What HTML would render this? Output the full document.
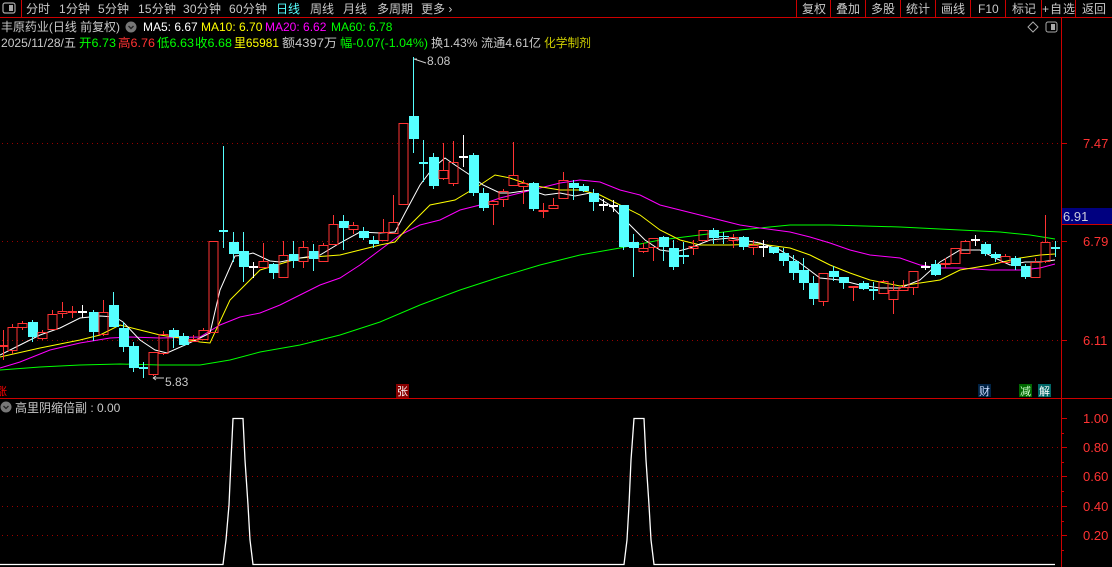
<!DOCTYPE html>
<html><head><meta charset="utf-8"><style>
body{margin:0;width:1112px;height:567px;background:#000;overflow:hidden;font-family:"Liberation Sans","Noto Sans CJK SC",sans-serif;}
svg{position:absolute;left:0;top:0}
text{font-family:"Liberation Sans","Noto Sans CJK SC",sans-serif;}
</style></head><body>
<svg id="s" width="1112" height="567" xmlns="http://www.w3.org/2000/svg">
<rect width="1112" height="567" fill="#000"/>
<line x1="0" y1="17.5" x2="1112" y2="17.5" stroke="#c00" stroke-width="1"/>
<line x1="21.5" y1="0" x2="21.5" y2="17" stroke="#c00"/>
<rect x="3" y="3" width="12" height="10" rx="2" fill="none" stroke="#aaa" stroke-width="1.2"/><rect x="9" y="5" width="4" height="6" fill="#aaa"/>
<g font-size="12" fill="#c8c8c8">
<text x="26" y="13">分时</text><text x="59" y="13" textLength="31">1分钟</text><text x="98" y="13" textLength="31">5分钟</text><text x="138" y="13" textLength="38">15分钟</text><text x="183" y="13" textLength="38">30分钟</text><text x="229" y="13" textLength="38">60分钟</text>
<text x="276" y="13" fill="#5ff">日线</text><text x="310" y="13">周线</text><text x="343" y="13">月线</text><text x="377" y="13">多周期</text><text x="421" y="13">更多 ›</text>
<text x="802" y="13">复权</text><text x="836" y="13">叠加</text><text x="871" y="13">多股</text><text x="906" y="13">统计</text><text x="941" y="13">画线</text><text x="978" y="13">F10</text><text x="1012" y="13">标记</text><text x="1042" y="13" textLength="33">+自选</text><text x="1082" y="13">返回</text>
</g>
<g stroke="#c00"><line x1="796.5" y1="0" x2="796.5" y2="17"/><line x1="830.5" y1="0" x2="830.5" y2="17"/><line x1="865.5" y1="0" x2="865.5" y2="17"/><line x1="900.5" y1="0" x2="900.5" y2="17"/><line x1="935.5" y1="0" x2="935.5" y2="17"/><line x1="970.5" y1="0" x2="970.5" y2="17"/><line x1="1005.5" y1="0" x2="1005.5" y2="17"/><line x1="1041.5" y1="0" x2="1041.5" y2="17"/><line x1="1075.5" y1="0" x2="1075.5" y2="17"/></g>
<g font-size="12">
<text x="1" y="31" fill="#c8c8c8" textLength="119" lengthAdjust="spacingAndGlyphs">丰原药业(日线 前复权)</text>
<circle cx="131" cy="27" r="5.5" fill="#777"/><path d="M128.5 26l2.5 2.5 2.5-2.5" stroke="#222" fill="none" stroke-width="1.4"/>
<text x="143" y="31" fill="#fff">MA5: 6.67</text><text x="201" y="31" fill="#ff0">MA10: 6.70</text><text x="265" y="31" fill="#f0f">MA20: 6.62</text><text x="331" y="31" fill="#0f0">MA60: 6.78</text>
<text x="1" y="47" fill="#c8c8c8" textLength="75" lengthAdjust="spacingAndGlyphs">2025/11/28/五</text>
<text x="79" y="47" fill="#0f0" textLength="37" lengthAdjust="spacingAndGlyphs">开6.73</text><text x="118" y="47" fill="#f33" textLength="37" lengthAdjust="spacingAndGlyphs">高6.76</text><text x="157" y="47" fill="#0f0" textLength="37" lengthAdjust="spacingAndGlyphs">低6.63</text><text x="195" y="47" fill="#0f0" textLength="37" lengthAdjust="spacingAndGlyphs">收6.68</text><text x="234" y="47" fill="#ff0" textLength="45" lengthAdjust="spacingAndGlyphs">里65981</text><text x="282" y="47" fill="#c8c8c8" textLength="55" lengthAdjust="spacingAndGlyphs">额4397万</text><text x="340" y="47" fill="#0f0" textLength="88" lengthAdjust="spacingAndGlyphs">幅-0.07(-1.04%)</text><text x="431" y="47" fill="#c8c8c8" textLength="110" lengthAdjust="spacingAndGlyphs">换1.43% 流通4.61亿</text><text x="544" y="47" fill="#cc0" textLength="47" lengthAdjust="spacingAndGlyphs">化学制剂</text>
</g>
<path d="M1033 22l5 5-5 5-5-5z" fill="none" stroke="#aaa"/>
<rect x="1046" y="22" width="11" height="10" rx="2" fill="none" stroke="#aaa"/><rect x="1051" y="24" width="4" height="6" fill="#aaa"/>
<line x1="1061.5" y1="18" x2="1061.5" y2="567" stroke="#c00"/>
<line x1="0" y1="398.5" x2="1112" y2="398.5" stroke="#c00"/>
<g stroke="#900" stroke-dasharray="1,4">
<line x1="2" y1="143.5" x2="1061" y2="143.5"/><line x1="2" y1="241.5" x2="1061" y2="241.5"/><line x1="2" y1="340.5" x2="1061" y2="340.5"/>
<line x1="2" y1="447.5" x2="1061" y2="447.5"/><line x1="2" y1="476.5" x2="1061" y2="476.5"/><line x1="2" y1="506.5" x2="1061" y2="506.5"/><line x1="2" y1="535.5" x2="1061" y2="535.5"/>
</g>
<g stroke="#c00"><line x1="1061" y1="143.5" x2="1067" y2="143.5"/><line x1="1061" y1="241.5" x2="1067" y2="241.5"/><line x1="1061" y1="340.5" x2="1067" y2="340.5"/>
<line x1="1061" y1="418.5" x2="1067" y2="418.5"/><line x1="1061" y1="447.5" x2="1067" y2="447.5"/><line x1="1061" y1="476.5" x2="1067" y2="476.5"/><line x1="1061" y1="506.5" x2="1067" y2="506.5"/><line x1="1061" y1="535.5" x2="1067" y2="535.5"/>
<line x1="1061" y1="433.5" x2="1064" y2="433.5"/><line x1="1061" y1="462.5" x2="1064" y2="462.5"/><line x1="1061" y1="491.5" x2="1064" y2="491.5"/><line x1="1061" y1="521.5" x2="1064" y2="521.5"/><line x1="1061" y1="550.5" x2="1064" y2="550.5"/></g>
<g font-size="13" fill="#f33">
<text x="1083" y="148">7.47</text><text x="1083" y="246">6.79</text><text x="1083" y="345">6.11</text>
<text x="1083" y="423">1.00</text><text x="1083" y="452">0.80</text><text x="1083" y="481">0.60</text><text x="1083" y="511">0.40</text><text x="1083" y="540">0.20</text>
</g>
<rect x="1062" y="208" width="50" height="16" fill="#000080"/><line x1="1062" y1="224.5" x2="1112" y2="224.5" stroke="#c00"/>
<text x="1063" y="221" font-size="13" fill="#ccd">6.91</text>
<g id="ma" fill="none" stroke-width="1"></g>
<g id="c"></g>
<text x="427" y="65" font-size="12" fill="#c8c8c8">8.08</text><path d="M414 59h3m-3 0l12 4" stroke="#ccc" fill="none"/>
<text x="165" y="386" font-size="12" fill="#c8c8c8">5.83</text><path d="M153 378h11m-11 0l3-2m-3 2l3 2" stroke="#ccc" fill="none"/>
<text x="-4" y="395" font-size="11" fill="#f00">涨</text>
<rect x="396" y="384" width="13" height="14" fill="#800"/><text x="397" y="395" font-size="11" fill="#fff">张</text>
<rect x="978" y="384" width="13" height="13" fill="#024"/><text x="979" y="395" font-size="11" fill="#cdf">财</text>
<rect x="1019" y="384" width="13" height="13" fill="#060"/><text x="1020" y="395" font-size="11" fill="#cfc">减</text>
<rect x="1038" y="384" width="13" height="13" fill="#066"/><text x="1039" y="395" font-size="11" fill="#fff">解</text>
<circle cx="6" cy="407" r="5.5" fill="#777"/><path d="M3.5 406l2.5 2.5 2.5-2.5" stroke="#222" fill="none" stroke-width="1.3"/>
<text x="15" y="412" font-size="12" fill="#c8c8c8">高里阴缩倍副 : 0.00</text>
<polyline fill="none" stroke="#fff" stroke-width="1.3" points="0,564.5 223,564.5 226,540 229,505 231,460 233,418.5 243,418.5 245,460 248,505 250,540 253,564.5 624,564.5 627,540 629,505 631,460 634,418.5 644,418.5 646,460 649,505 651,540 654,564.5 1055,564.5"/>
</svg>
<script>
var C=[[3,346,346,330,360],[12,327,350,324,354],[22,323,327,321,330],[32,337,322,320,342],[42,332,338,330,340],[52,314,329,310,329],[62,311,313,302,318],[72,312,312,306,318],[82,312,312,305,318],[93,312,332,310,341],[103,312,334,300,336],[113,327,305,292,327],[123,328,347,322,352],[133,346,368,342,372],[143,368,368,362,378],[153,352,374,352,376],[163,334,353,331,355],[173,337,330,328,348],[183,336,345,333,346],[193,339,341,335,342],[203,330,339,328,340],[213,241,332,241,332],[223,231,231,146,248],[233,242,254,232,262],[243,251,267,232,282],[253,267,267,262,278],[263,261,267,243,268],[273,264,273,263,279],[283,255,277,241,278],[293,254,261,241,268],[303,247,261,241,268],[313,251,259,244,271],[323,245,261,243,262],[333,224,244,215,244],[343,221,228,215,250],[353,225,229,222,234],[363,231,238,227,240],[373,240,244,236,248],[383,232,240,219,240],[393,222,233,195,233],[403,123,204,123,204],[413,116,139,57,153],[423,163,163,140,182],[433,157,186,153,189],[443,170,178,143,180],[453,162,183,141,186],[463,157,157,135,167],[473,155,193,153,196],[483,193,208,188,211],[493,201,204,200,225],[503,191,199,189,207],[513,175,185,142,186],[523,183,186,180,204],[533,183,209,182,211],[543,210,211,203,218],[553,205,208,198,209],[563,180,198,172,199],[573,183,188,180,200],[583,186,191,184,192],[593,193,202,189,211],[603,205,205,199,211],[613,206,206,200,212],[623,205,247,205,250],[633,242,248,234,277],[643,248,251,243,253],[653,238,247,238,261],[663,237,247,236,261],[673,248,267,240,270],[683,255,257,242,264],[693,246,248,240,255],[703,230,240,230,240],[713,230,238,228,244],[723,236,237,232,244],[733,237,240,234,248],[743,237,247,236,250],[753,245,247,240,255],[763,247,247,240,257],[773,247,253,247,254],[783,253,261,248,266],[793,261,273,255,280],[803,270,283,258,290],[813,283,299,276,305],[823,273,301,273,306],[833,271,277,266,281],[843,277,283,277,289],[853,286,287,286,301],[863,283,289,281,290],[873,290,290,282,300],[883,281,293,280,294],[893,290,299,281,314],[903,287,290,280,290],[913,271,287,271,295],[925,267,267,262,270],[935,264,275,260,276],[945,263,264,258,268],[955,248,263,248,263],[965,241,253,240,254],[975,240,240,235,246],[985,244,254,242,256],[995,254,258,252,262],[1005,256,262,254,262],[1015,258,266,256,270],[1025,266,277,264,279],[1035,262,277,258,278],[1045,242,261,215,263],[1055,248,248,241,257]];
var R=[12,22,42,52,62,103,153,163,193,203,213,263,283,303,323,333,353,383,393,403,443,453,493,503,513,523,543,553,563,643,653,693,703,733,753,823,853,883,893,903,913,945,955,965,1005,1035,1045];
(function(){
var g=document.getElementById('c'),h='';
C.forEach(function(d){var x=d[0],o=d[1],c=d[2],hi=d[3],lo=d[4];
 if(o==c){var col='#fff';if(x<80||x==193||x==493||x==853)col='#f33';if(x==143||x==223||x==423||x==683||x==873||x==1055)col='#5ff';h+='<line x1="'+(x+0.5)+'" y1="'+hi+'" x2="'+(x+0.5)+'" y2="'+lo+'" stroke="'+col+'"/><rect x="'+(x-4)+'" y="'+(o-1)+'" width="9" height="2" fill="'+col+'"/>';return;}
 var top=Math.min(o,c),bot=Math.max(o,c);
 if(R.indexOf(x)>=0){h+='<line x1="'+(x+0.5)+'" y1="'+hi+'" x2="'+(x+0.5)+'" y2="'+top+'" stroke="#f33"/><line x1="'+(x+0.5)+'" y1="'+bot+'" x2="'+(x+0.5)+'" y2="'+lo+'" stroke="#f33"/><rect x="'+(x-4)+'" y="'+(top+0.5)+'" width="9" height="'+Math.max(bot-top,1)+'" fill="none" stroke="#f33"/>';}
 else{h+='<line x1="'+(x+0.5)+'" y1="'+hi+'" x2="'+(x+0.5)+'" y2="'+lo+'" stroke="#5ff"/><rect x="'+(x-4)+'" y="'+top+'" width="10" height="'+Math.max(bot-top,1)+'" fill="#5ff"/>';}
});
g.innerHTML=h;
var L={'#0f0':'0,370 40,367 80,365 120,364 160,365 200,365 230,360 260,352 300,345 340,335 380,322 420,305 460,290 500,277 540,265 580,255 620,248 660,240 700,235 740,230 790,225 830,225 900,227 960,230 1000,232 1030,235 1055,239',
'#f0f':'0,368 20,362 50,350 80,343 110,338 130,337 160,338 200,337 220,325 240,317 260,313 280,305 300,295 320,285 340,278 360,265 380,250 400,235 420,225 440,220 460,210 480,205 500,198 520,193 540,188 560,183 580,180 600,182 620,190 640,195 660,205 680,210 700,215 720,220 740,225 760,228 790,232 810,237 830,243 850,250 870,255 900,258 920,265 940,268 960,268 990,270 1020,270 1040,268 1055,264',
'#ff0':'0,357 40,348 80,340 100,335 120,325 140,330 160,335 180,338 200,342 210,343 230,300 260,270 300,258 340,255 360,250 380,245 395,242 410,225 430,205 455,200 480,185 495,175 510,178 530,185 560,190 580,190 600,195 620,205 640,215 660,230 680,240 700,245 730,245 760,244 790,248 810,255 830,265 850,273 870,280 900,286 920,283 940,280 960,270 990,265 1020,258 1040,255 1055,254',
'#fff':'0,355 20,345 40,335 60,328 80,318 100,316 115,317 123,322 140,340 155,350 167,353 185,345 200,338 210,333 220,290 235,256 245,255 253,253 270,261 280,262 300,258 320,255 340,243 360,232 380,233 395,232 405,213 420,185 433,168 445,158 455,165 470,175 483,185 500,193 510,193 530,190 545,195 560,193 575,196 590,193 610,205 625,220 645,240 660,250 675,252 690,248 710,240 730,238 760,243 780,250 800,263 820,278 840,280 860,285 880,288 900,288 920,280 940,262 960,250 980,250 995,258 1010,265 1025,262 1040,262 1055,260'};
var m='';for(var k in L)m+='<polyline points="'+L[k]+'" stroke="'+k+'" fill="none"/>';
document.getElementById('ma').innerHTML=m;
})();
</script>
</body></html>
